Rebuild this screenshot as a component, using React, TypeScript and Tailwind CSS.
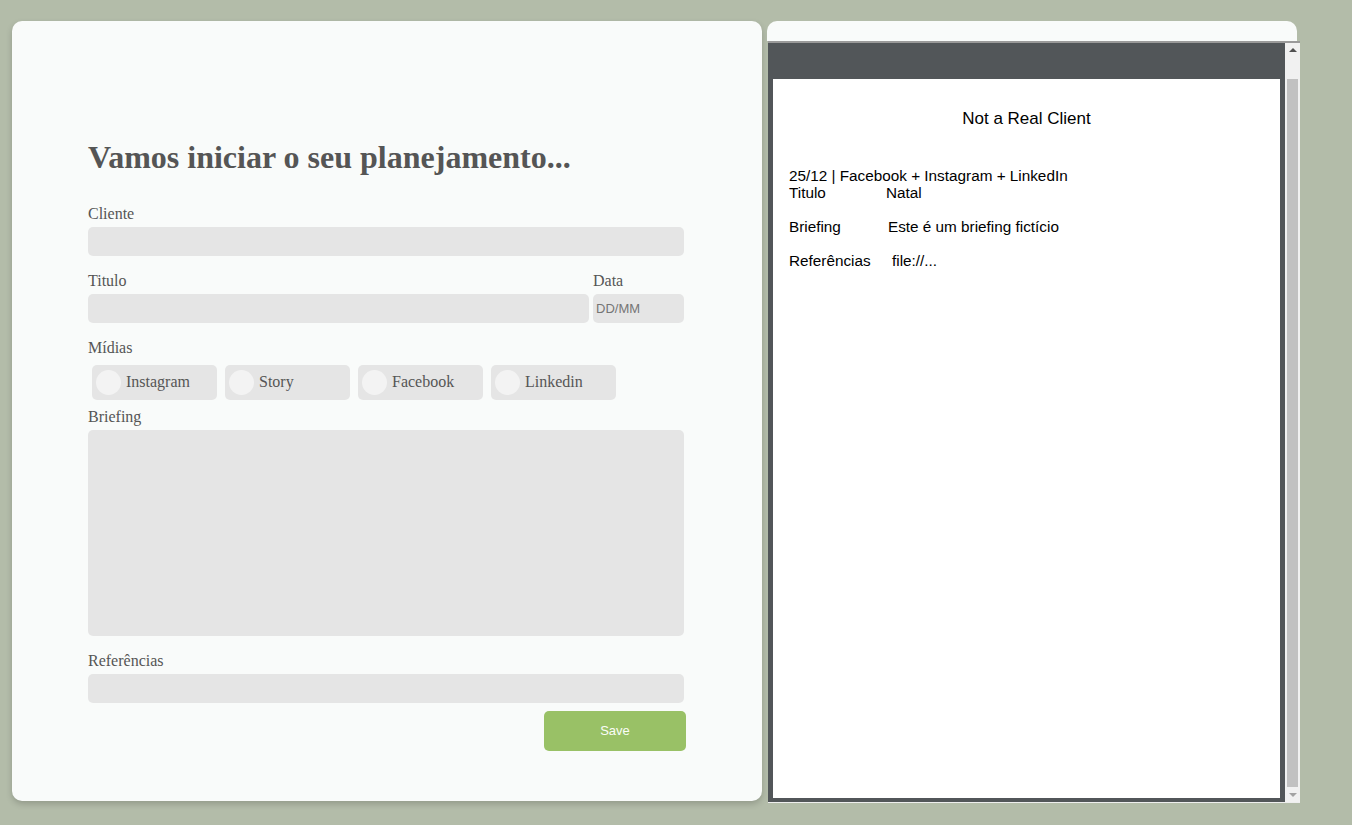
import React from 'react';

const serif = "font-['Liberation_Serif',serif]";
const sans = "font-['Liberation_Sans',Arial,sans-serif]";

function Label({ children, className = '' }: { children: React.ReactNode; className?: string }) {
  return <div className={`text-[16px] leading-[18px] text-[#555] ${serif} ${className}`}>{children}</div>;
}

function Field({ className = '' }: { className?: string }) {
  return <div className={`h-[29px] rounded-[5px] bg-[#e5e5e5] ${className}`} />;
}

const midias = ['Instagram', 'Story', 'Facebook', 'Linkedin'];

function PlanForm() {
  return (
    <div className="w-[750px] h-[780px] shrink-0 rounded-[10px] bg-[#f9fbfa] shadow-[0_3px_6px_rgba(0,0,0,0.18)] pl-[76px] pt-[118px]">
      <h1 className={`text-[32px] leading-[37px] font-bold text-[#555] ${serif}`}>
        Vamos iniciar o seu planejamento...
      </h1>

      <div className="w-[596px] mt-[29px]">
        <Label>Cliente</Label>
        <Field className="mt-[4px]" />

        <div className="flex gap-[4px] mt-[16px]">
          <div className="flex-1">
            <Label>Titulo</Label>
            <Field className="mt-[4px]" />
          </div>
          <div className="w-[91px]">
            <Label>Data</Label>
            <div className={`mt-[4px] h-[29px] rounded-[5px] bg-[#e5e5e5] flex items-center pl-[3px] text-[13px] text-[#757575] ${sans}`}>
              DD/MM
            </div>
          </div>
        </div>

        <Label className="mt-[16px]">Mídias</Label>
        <div className="flex gap-[8px] mt-[8px] ml-[4px]">
          {midias.map((m) => (
            <div key={m} className="w-[125px] h-[35px] rounded-[5px] bg-[#e5e5e5] flex items-center pl-[4px] gap-[5px]">
              <span className="w-[25px] h-[25px] rounded-full bg-[#f3f3f3]" />
              <span className={`text-[16px] leading-[18px] -mt-[2px] text-[#555] ${serif}`}>{m}</span>
            </div>
          ))}
        </div>

        <Label className="mt-[8px]">Briefing</Label>
        <div className="mt-[4px] h-[206px] rounded-[5px] bg-[#e5e5e5]" />

        <Label className="mt-[16px]">Referências</Label>
        <Field className="mt-[4px]" />

        <div className="flex justify-end mt-[8px] -mr-[2px]">
          <button className={`w-[142px] h-[40px] rounded-[5px] bg-[#99c166] text-[13px] text-[#fbfdf8] ${sans}`}>
            Save
          </button>
        </div>
      </div>
    </div>
  );
}

function Preview() {
  return (
    <div className="flex flex-col">
      <div className="w-[530px] h-[20px] rounded-t-[10px] bg-[#f9fbfa]" />
      <div className="ml-[1px] w-[532px] h-[762px] flex border-t-2 border-[#9a9a9a] border-b border-b-[#eeeeee] bg-[#f1f1f1]">
        {/* visor do documento */}
        <div className="flex-1 flex flex-col bg-[#525659] px-[5px] pb-[4px]">
          <div className="h-[36px] shrink-0" />
          <div className={`flex-1 bg-white text-black text-[15.3px] leading-[17px] ${sans} px-[16px]`}>
            <div className="text-center text-[17px] leading-[19px] pt-[30px]">Not a Real Client</div>
            <div className="mt-[39px]">25/12 | Facebook + Instagram + LinkedIn</div>
            <div className="flex">
              <span className="w-[97px]">Titulo</span>
              <span>Natal</span>
            </div>
            <div className="flex mt-[17px]">
              <span className="w-[99px]">Briefing</span>
              <span>Este é um briefing fictício</span>
            </div>
            <div className="flex mt-[17px]">
              <span className="w-[103px]">Referências</span>
              <span>file://...</span>
            </div>
          </div>
        </div>
        {/* barra de rolagem */}
        <div className="w-[15px] flex flex-col items-center">
          <div className="h-[14px] flex items-center justify-center">
            <span className="w-0 h-0 border-l-[4px] border-r-[4px] border-b-[4px] border-l-transparent border-r-transparent border-b-[#505050]" />
          </div>
          <div className="mt-[22px] w-[11px] h-[708px] bg-[#c1c1c1]" />
          <div className="flex-1 flex items-center justify-center">
            <span className="w-0 h-0 border-l-[4px] border-r-[4px] border-t-[4px] border-l-transparent border-r-transparent border-t-[#a3a3a3]" />
          </div>
        </div>
      </div>
    </div>
  );
}

export default function App() {
  return (
    <div className="min-h-screen w-full bg-[#b3bca9] flex items-start gap-[5px] pl-[12px] pt-[21px]">
      <PlanForm />
      <Preview />
    </div>
  );
}
